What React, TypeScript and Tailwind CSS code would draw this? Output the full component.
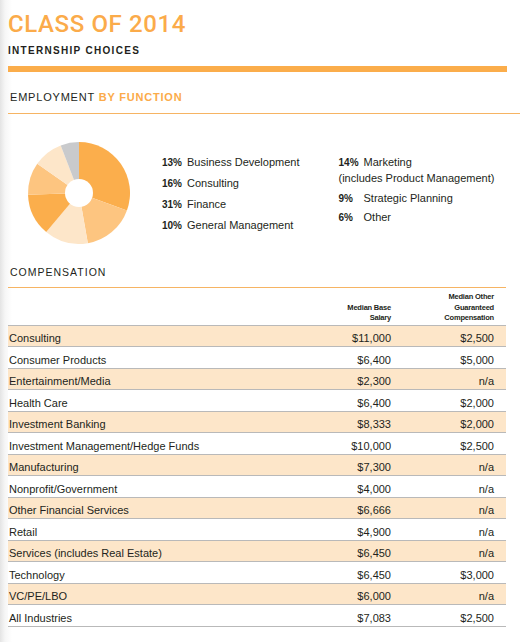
import React from "react";

const slices: [number, number, string][] = [
  [0, 110, "#fbae4c"],
  [110, 170, "#fdc580"],
  [170, 220, "#fde6c9"],
  [220, 268, "#fbae4c"],
  [268, 305, "#fdc580"],
  [305, 339, "#fde6c9"],
  [339, 360, "#c9cacc"],
];

function wedge(a0: number, a1: number, cx: number, cy: number, r: number) {
  const p = (a: number) => {
    const rad = (a * Math.PI) / 180;
    return [cx + r * Math.sin(rad), cy - r * Math.cos(rad)];
  };
  const [x0, y0] = p(a0);
  const [x1, y1] = p(a1);
  const large = a1 - a0 > 180 ? 1 : 0;
  return `M${cx},${cy} L${x0},${y0} A${r},${r} 0 ${large} 1 ${x1},${y1} Z`;
}

function Pie() {
  return (
    <svg width="104" height="104" viewBox="0 0 104 104" className="shrink-0">
      {slices.map(([a0, a1, c], i) => (
        <path key={i} d={wedge(a0, a1, 52, 52, 51)} fill={c} />
      ))}
      <circle cx="52" cy="52" r="14" fill="#fff" />
    </svg>
  );
}

const rows: [string, string, string][] = [
  ["Consulting", "$11,000", "$2,500"],
  ["Consumer Products", "$6,400", "$5,000"],
  ["Entertainment/Media", "$2,300", "n/a"],
  ["Health Care", "$6,400", "$2,000"],
  ["Investment Banking", "$8,333", "$2,000"],
  ["Investment Management/Hedge Funds", "$10,000", "$2,500"],
  ["Manufacturing", "$7,300", "n/a"],
  ["Nonprofit/Government", "$4,000", "n/a"],
  ["Other Financial Services", "$6,666", "n/a"],
  ["Retail", "$4,900", "n/a"],
  ["Services (includes Real Estate)", "$6,450", "n/a"],
  ["Technology", "$6,450", "$3,000"],
  ["VC/PE/LBO", "$6,000", "n/a"],
  ["All Industries", "$7,083", "$2,500"],
];

function LegendItem({ pct, label }: { pct: string; label: React.ReactNode }) {
  return (
    <div className="flex h-[14px] items-baseline">
      <span className="w-[25px] shrink-0 text-[10px] font-bold">{pct}</span>
      <span className="text-[11px]">{label}</span>
    </div>
  );
}

export default function App() {
  return (
    <div
      className="w-[520px] h-[642px] overflow-hidden bg-[linear-gradient(to_right,#e4e4e4_0px,#f6f6f6_5px,#ffffff_12px)] pl-[8px] pt-[12px] text-[#231f20]"
      style={{ fontFamily: '"Liberation Sans", Arial, sans-serif' }}
    >
      <h1
        className="text-[24px] leading-[24px] font-medium tracking-[0.6px] text-[#fbab4a]"
        style={{ fontFamily: 'Roboto, "Liberation Sans", sans-serif' }}
      >
        CLASS OF 2014
      </h1>
      <h2 className="mt-[10px] text-[10px] leading-[10px] font-bold tracking-[1.3px]">
        INTERNSHIP CHOICES
      </h2>
      <div className="mt-[10px] h-[6px] w-[499px] bg-[#fbad4b]" />

      <h3 className="mt-[20px] pl-[2px] text-[11px] leading-[11px] tracking-[0.8px]">
        EMPLOYMENT <span className="font-bold text-[#fbab4a]">BY FUNCTION</span>
      </h3>
      <div className="mt-[10px] h-px w-[512px] bg-[#f6b463]" />

      <div className="mt-[27px] flex">
        <div className="ml-[19px]">
          <Pie />
        </div>
        <div className="ml-[31px] mt-[14px] flex flex-col gap-[7px] leading-[14px]">
          <LegendItem pct="13%" label="Business Development" />
          <LegendItem pct="16%" label="Consulting" />
          <LegendItem pct="31%" label="Finance" />
          <LegendItem pct="10%" label="General Management" />
        </div>
        <div className="ml-[39px] mt-[14px] flex flex-col leading-[14.5px]">
          <div>
            <LegendItem pct="14%" label="Marketing" />
            <div className="mt-[1.5px] text-[11px]">(includes Product Management)</div>
          </div>
          <div className="mt-[6px]">
            <LegendItem pct="9%" label="Strategic Planning" />
          </div>
          <div className="mt-[5px]">
            <LegendItem pct="6%" label="Other" />
          </div>
        </div>
      </div>

      <h3 className="mt-[22px] pl-[2px] text-[10.5px] leading-[11px] tracking-[1px]">
        COMPENSATION
      </h3>
      <div className="mt-[9px] h-px w-[498px] bg-[#f6b463]" />

      <div className="w-[498px]">
        <div className="flex items-end border-b border-[#b9b9b9] pr-[12px] pb-[1px] pt-[4px] text-[7.5px] font-bold leading-[10.5px] tracking-[-0.2px]">
          <div className="flex-1" />
          <div className="w-[100px] text-right">
            Median Base
            <br />
            Salary
          </div>
          <div className="w-[103px] text-right">
            Median Other
            <br />
            Guaranteed
            <br />
            Compensation
          </div>
        </div>
        {rows.map(([label, base, other], i) => (
          <div
            key={label}
            className={`flex h-[21.5px] items-end border-b border-[#b9b9b9] pb-[1px] pl-[1px] pr-[12px] text-[11px] leading-[13px] ${
              i % 2 === 0 ? "bg-[#fde6c9]" : "bg-white"
            }`}
          >
            <div className="flex-1">{label}</div>
            <div className="w-[100px] text-right">{base}</div>
            <div className="w-[103px] text-right">{other}</div>
          </div>
        ))}
      </div>
    </div>
  );
}
